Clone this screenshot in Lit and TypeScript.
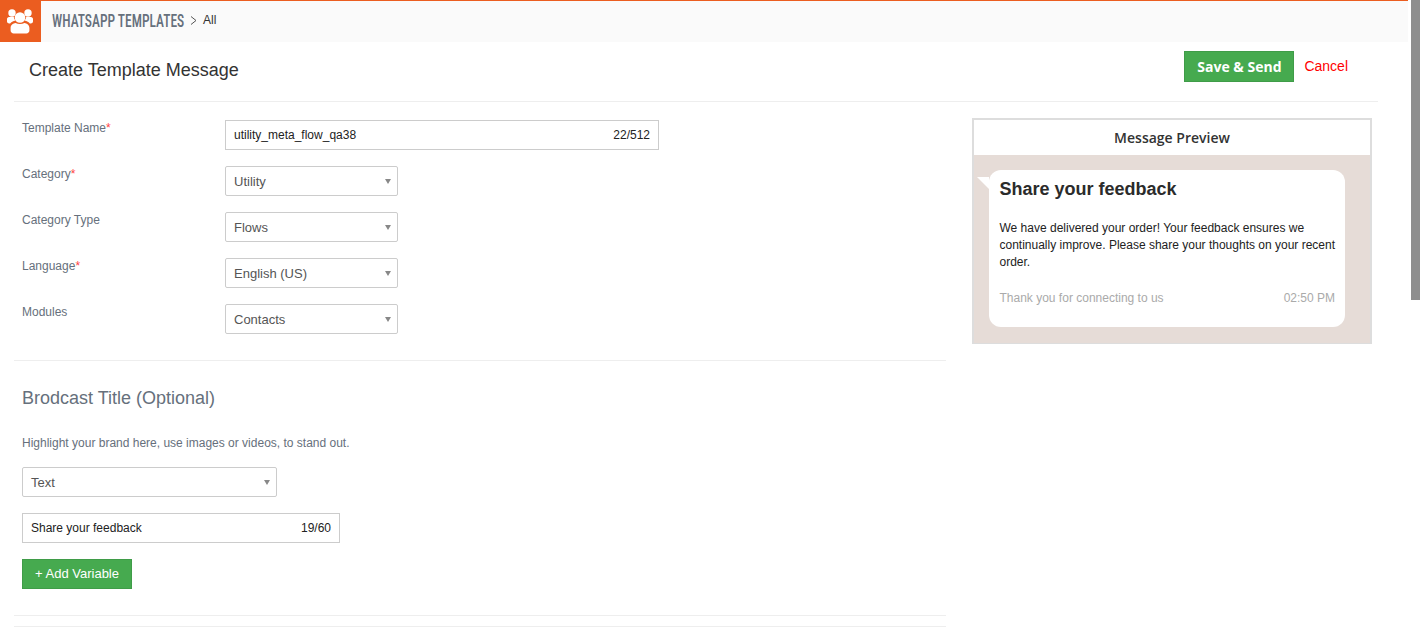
import { LitElement, html, css } from "lit";
import { customElement } from "lit/decorators.js";

const caret = html`<svg class="caret" width="6" height="5" viewBox="0 0 6 5"><path d="M0 0H6L3 5Z" fill="#888"/></svg>`;

@customElement("app-root")
export class AppRoot extends LitElement {
  static styles = css`
    :host { display: block; height: 640px; overflow: hidden; position: relative; background: #fff;
      font-family: "Liberation Sans", Arial, sans-serif; color: #333; }
    * { box-sizing: border-box; }
    .page { width: 1408px; }
    .topbar { height: 42px; background: #fafafa; border-top: 1px solid #eb5d20; display: flex; align-items: center; }
    .logo { width: 41px; height: 42px; margin-top: -1px; background: #eb5d20; display: flex; align-items: center; justify-content: center; flex: none; padding-right: 1px; }
    .crumbwrap { margin-left: 11px; width: 132px; height: 22px; margin-top: -2px; flex: none; }
    .crumb { display: block; white-space: nowrap; transform: scaleX(0.75); transform-origin: left center; font-family: "Liberation Sans Narrow", "Roboto Condensed", "Liberation Sans", sans-serif; font-size: 18px; line-height: 22px; font-weight: 500; color: #66707c; }
    .chev { margin: -3px 6px 0 6px; display: block; }
    .all { font-size: 12px; color: #333; margin-top: -3px; }
    .titlebar { margin: 0 30px 0 14px; height: 60px; border-bottom: 1px solid #eee; display: flex; align-items: flex-start; padding-left: 15px; }
    h1 { margin: 17px 0 0; font-size: 18px; font-weight: 400; line-height: 22px; color: #333; flex: 1; }
    .save { margin-top: 9px; width: 110px; height: 31px; background: #46aa4f; border: 1px solid #3f9c48; color: #fff; font: 700 14px "Open Sans", sans-serif; display: flex; align-items: center; justify-content: center; }
    .cancel { margin: 15px 30px 0 10px; font-size: 14px; line-height: 18px; color: #f00; }
    .main { display: grid; grid-template-columns: 932px 400px; column-gap: 26px; margin-left: 14px; }
    .form { display: flex; flex-direction: column; }
    .fields { padding: 18px 0 10px 8px; border-bottom: 1px solid #eee; display: flex; flex-direction: column; gap: 16px; height: 259px; }
    .row { display: flex; height: 30px; }
    .label { width: 203px; font-size: 12px; line-height: 16px; color: #66707c; }
    .req { color: #f44; }
    .box { height: 30px; border: 1px solid #ccc; background: #fff; display: flex; align-items: center; justify-content: space-between; padding: 0 8px; font-size: 12px; color: #222; }
    .sel { border-radius: 2px; color: #555; padding-right: 6px; font-size: 13px; }
    .w434 { width: 434px; }
    .w173 { width: 173px; }
    .w255 { width: 255px; }
    .w318 { width: 318px; }
    .caret { display: block; }
    .broadcast { padding: 26px 0 0 8px; height: 255px; border-bottom: 1px solid #eee; display: flex; flex-direction: column; align-items: flex-start; }
    h2 { margin: 0; font-size: 18px; font-weight: 400; line-height: 22px; color: #66707c; }
    .hint { margin: 26px 0 0; font-size: 12px; line-height: 16px; color: #66707c; }
    .broadcast .sel { margin-top: 16px; }
    .broadcast .inp { margin-top: 16px; }
    .add { margin-top: 16px; width: 110px; height: 30px; background: #46aa4f; border: 1px solid #3f9c48; color: #fff; font-size: 13px; padding-bottom: 2px; display: flex; align-items: center; justify-content: center; }
    .last { height: 11px; border-bottom: 1px solid #eee; }
    .preview { margin-top: 16px; height: 226px; border: 2px solid #ddd; border-bottom-width: 1px; background: #e6dcd7; display: flex; flex-direction: column; }
    .phead { height: 35px; background: #fff; flex: none; display: flex; align-items: center; justify-content: center; font: 600 14px "Open Sans", sans-serif; color: #333; }
    .bubble { position: relative; margin: 15px 25px 0 15px; height: 157px; background: #fff; border-radius: 12px; padding: 8px 10px 0 10.5px; }
    .tail { position: absolute; left: -12px; top: 7px; width: 12px; height: 12px; background: #fff; clip-path: polygon(0 0, 100% 0, 100% 100%); }
    .btitle { font-size: 18px; font-weight: 700; line-height: 22px; color: #2b2b2b; }
    .btext { margin-top: 20px; margin-right: -4px; font-size: 12px; line-height: 17px; color: #222; }
    .bfoot { margin-top: 19px; display: flex; justify-content: space-between; font-size: 12px; line-height: 16px; color: #aaa; }
    .scroll { position: absolute; left: 1411px; top: 0; width: 9px; height: 300px; background: #8e8e8e; }
  `;

  private field(label: string, req: boolean, val: string) {
    return html`<div class="row">
      <div class="label">${label}${req ? html`<span class="req">*</span>` : ""}</div>
      <div class="box sel w173"><span>${val}</span>${caret}</div>
    </div>`;
  }

  render() {
    return html`
      <div class="page">
        <div class="topbar">
          <div class="logo">
            <svg width="26" height="25" viewBox="0 0 26 25" fill="#fff">
              <circle cx="5" cy="4" r="3.7"/><circle cx="21" cy="4" r="3.7"/>
              <circle cx="13" cy="8.5" r="5.3"/>
              <path d="M0 10C0 8.6 1.5 8 3 8H6.8C7 9.6 7.6 10.6 8.6 11.6C6 12.3 4 13 3.2 14.5C1.5 14.5 0 14 0 12.5Z"/>
              <path d="M26 10C26 8.6 24.5 8 23 8H19.2C19 9.6 18.4 10.6 17.4 11.6C20 12.3 22 13 22.8 14.5C24.5 14.5 26 14 26 12.5Z"/>
              <path d="M3.6 19C3.6 16 6 14.5 8.6 14C11 15.3 15 15.3 17.4 14C20 14.5 22.4 16 22.4 19V21.5C22.4 23.3 21 24.4 19.4 24.4H6.6C5 24.4 3.6 23.3 3.6 21.5Z"/>
            </svg>
          </div>
          <div class="crumbwrap"><span class="crumb">WHATSAPP TEMPLATES</span></div>
          <svg class="chev" width="7" height="9" viewBox="0 0 7 9"><path d="M1 0.5L6 4.5L1 8.5" fill="none" stroke="#555" stroke-width="1"/></svg>
          <span class="all">All</span>
        </div>
        <div class="titlebar">
          <h1>Create Template Message</h1>
          <div class="save">Save &amp; Send</div>
          <div class="cancel">Cancel</div>
        </div>
        <div class="main">
          <div class="form">
            <div class="fields">
              <div class="row">
                <div class="label">Template Name<span class="req">*</span></div>
                <div class="box w434"><span>utility_meta_flow_qa38</span><span>22/512</span></div>
              </div>
              ${this.field("Category", true, "Utility")}
              ${this.field("Category Type", false, "Flows")}
              ${this.field("Language", true, "English (US)")}
              ${this.field("Modules", false, "Contacts")}
            </div>
            <div class="broadcast">
              <h2>Brodcast Title (Optional)</h2>
              <p class="hint">Highlight your brand here, use images or videos, to stand out.</p>
              <div class="box sel w255"><span>Text</span>${caret}</div>
              <div class="box inp w318"><span>Share your feedback</span><span>19/60</span></div>
              <div class="add">+ Add Variable</div>
            </div>
            <div class="last"></div>
          </div>
          <div class="preview">
            <div class="phead">Message Preview</div>
            <div class="bubble">
              <div class="tail"></div>
              <div class="btitle">Share your feedback</div>
              <div class="btext">We have delivered your order! Your feedback ensures we continually improve. Please share your thoughts on your recent order.</div>
              <div class="bfoot"><span>Thank you for connecting to us</span><span>02:50 PM</span></div>
            </div>
          </div>
        </div>
      </div>
      <div class="scroll"></div>
    `;
  }
}
